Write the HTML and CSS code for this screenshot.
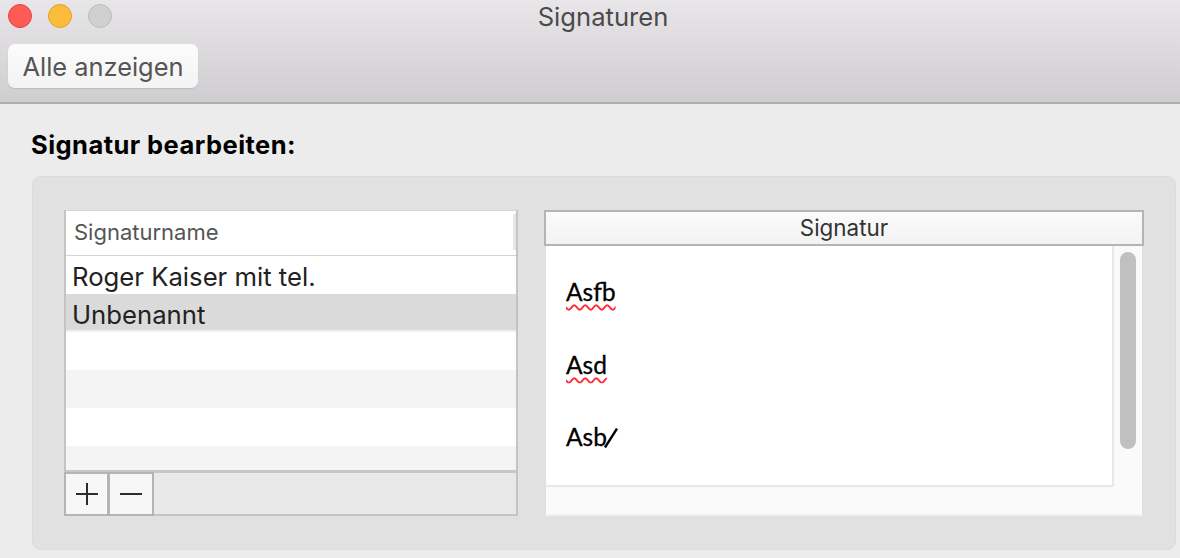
FILE: index.html
```html
<!DOCTYPE html>
<html lang="de">
<head>
    <meta charset="UTF-8">
    <meta name="viewport" content="width=device-width, initial-scale=1.0">
    <title>Signaturen</title>
    <link rel="stylesheet" href="styles.css">
</head>
<body>
    <div class="toolbar">
        <div class="titlebar">
            <div class="lights">
                <span class="light red"></span>
                <span class="light yellow"></span>
                <span class="light grey"></span>
            </div>
            <div class="title">Signaturen</div>
        </div>
        <button class="show-all">Alle anzeigen</button>
    </div>

    <div class="content">
        <h1>Signatur bearbeiten:</h1>
        <div class="panel">
            <div class="list-box">
                <div class="list-head"><span>Signaturname</span><i class="head-sep"></i></div>
                <div class="row">Roger Kaiser mit tel.</div>
                <div class="row selected">Unbenannt</div>
                <div class="row"></div>
                <div class="row alt"></div>
                <div class="row"></div>
                <div class="row alt short"></div>
                <div class="list-foot">
                    <button class="foot-btn">
                        <svg width="24" height="24" viewBox="0 0 24 24"><path d="M1 12H23M12 1V23" stroke="#2b2b2b" stroke-width="2" fill="none"/></svg>
                    </button>
                    <button class="foot-btn minus">
                        <svg width="24" height="24" viewBox="0 0 24 24"><path d="M1 12H23" stroke="#2b2b2b" stroke-width="2" fill="none"/></svg>
                    </button>
                </div>
            </div>

            <div class="editor">
                <div class="editor-head">Signatur</div>
                <div class="editor-body">
                    <div class="page">
                        <p class="typo">Asfb</p>
                        <p class="typo">Asd</p>
                        <p>Asb<svg class="slash" width="14" height="20" viewBox="0 0 14 20"><path d="M1 19.5L13 .5" stroke="#000" stroke-width="2.4" fill="none"/></svg></p>
                    </div>
                    <div class="track"><div class="thumb"></div></div>
                </div>
            </div>
        </div>
    </div>
</body>
</html>
```

FILE: styles.css
```css
* {
    box-sizing: border-box;
}

html, body {
    margin: 0;
    height: 100%;
    overflow: hidden;
}

body {
    background-color: #ececec;
    font-family: Inter, "Liberation Sans", sans-serif;
    color: #222;
}

/* Toolbar */
.toolbar {
    height: 104px;
    padding: 0 8px;
    background: linear-gradient(#e8e6e9, #cfcdcf);
    border-bottom: 2px solid #b0afb0;
}
.titlebar {
    height: 44px;
    display: flex;
}
.lights {
    display: flex;
    gap: 16px;
    padding-top: 4px;
}
.light {
    width: 24px;
    height: 24px;
    border-radius: 50%;
    border: 1px solid;
}
.red { background-color: #fc5b57; border-color: #e5463f; }
.yellow { background-color: #fdbb3c; border-color: #e0a02c; }
.grey { background-color: #d0d0d0; border-color: #bcbcbc; }
.title {
    flex: 1;
    padding: 3px 78px 0 0;
    text-align: center;
    font-size: 25.6px;
    line-height: 28px;
    color: #4a4a4a;
}
.show-all {
    display: block;
    width: 190px;
    height: 44px;
    padding: 0;
    border: none;
    border-radius: 7px;
    background: linear-gradient(#fcfcfc, #f3f3f3);
    box-shadow: 0 1px 1px #bbb;
    font-family: inherit;
    font-size: 25.4px;
    color: #555;
}

/* Inhalt */
.content {
    padding: 26px 4px 0 32px;
}
h1 {
    margin: 0 0 16px -1px;
    font-size: 25.5px;
    letter-spacing: 0.45px;
    line-height: 30px;
    font-weight: 700;
    color: #000;
}
.panel {
    height: 374px;
    padding: 33px 30px 0 31px;
    display: flex;
    gap: 26px;
    background-color: #e1e1e1;
    border: 1px solid #dcdcdc;
    border-radius: 9px;
}

/* Liste */
.list-box {
    width: 454px;
    height: 306px;
    background-color: #fff;
    border-left: 2px solid #c4c4c4;
    border-right: 2px solid #c4c4c4;
    border-top: 1px solid #d4d4d4;
}
.list-head {
    height: 45px;
    padding: 0 0 2px 8px;
    display: flex;
    justify-content: space-between;
    align-items: center;
    border-bottom: 1px solid #d4d4d4;
    font-size: 22px;
    color: #555;
}
.head-sep {
    width: 3px;
    height: 36px;
    background-color: #e6e6e6;
}
.row {
    height: 38px;
    padding-left: 6px;
    font-size: 25.7px;
    line-height: 42px;
    color: #222;
}
.selected {
    background-color: #dadada;
    border-bottom: 2px solid #efefef;
}
.alt { background-color: #f4f4f4; }
.short { height: 24px; }
.list-foot {
    height: 46px;
    display: flex;
    margin-left: -2px;
    margin-right: -2px;
    background-color: #e9e9e9;
    border-top: 3px solid #c6c6c6;
    border-bottom: 2px solid #c4c4c4;
    border-right: 2px solid #c4c4c4;
}
.foot-btn {
    width: 45px;
    height: 44px;
    margin-top: -1px;
    padding: 0;
    display: flex;
    align-items: center;
    justify-content: center;
    background: #f7f7f7;
    border: 2px solid #b4b4b4;
}
.minus {
    margin-left: -1px;
    width: 46px;
}

/* Editor */
.editor {
    width: 600px;
    height: 306px;
}
.editor-head {
    height: 36px;
    text-align: center;
    font-size: 22.4px;
    line-height: 32px;
    color: #333;
    background: linear-gradient(#fbfbfb, #f3f3f3);
    border: 2px solid #b4b4b4;
}
.editor-body {
    margin: 0 2px;
    height: 270px;
    display: flex;
    align-items: flex-start;
    background-color: #fafafa;
    border-bottom: 2px solid #f0f0f0;
}
.page {
    width: 568px;
    height: 241px;
    padding: 31px 0 0 20px;
    background-color: #fff;
    border-right: 2px solid #e8e8e8;
    border-bottom: 2px solid #e8e8e8;
    font-family: Lato, "Open Sans", sans-serif;
    font-size: 24.5px;
    color: #000;
    -webkit-text-stroke: 0.3px #000;
}
.page p {
    margin: 0 0 42.5px 0;
    height: 30px;
    line-height: 30px;
}
.typo {
    text-decoration: underline wavy #ff2a3a 2px;
    text-underline-offset: 2.5px;
    text-decoration-skip-ink: none;
}
.slash {
    margin-left: -3px;
    vertical-align: -2px;
}
.track {
    flex: 1;
    padding: 6px 6px 0 6px;
}
.thumb {
    width: 16px;
    height: 197px;
    border-radius: 8px;
    background-color: #c0c0c0;
}
```
